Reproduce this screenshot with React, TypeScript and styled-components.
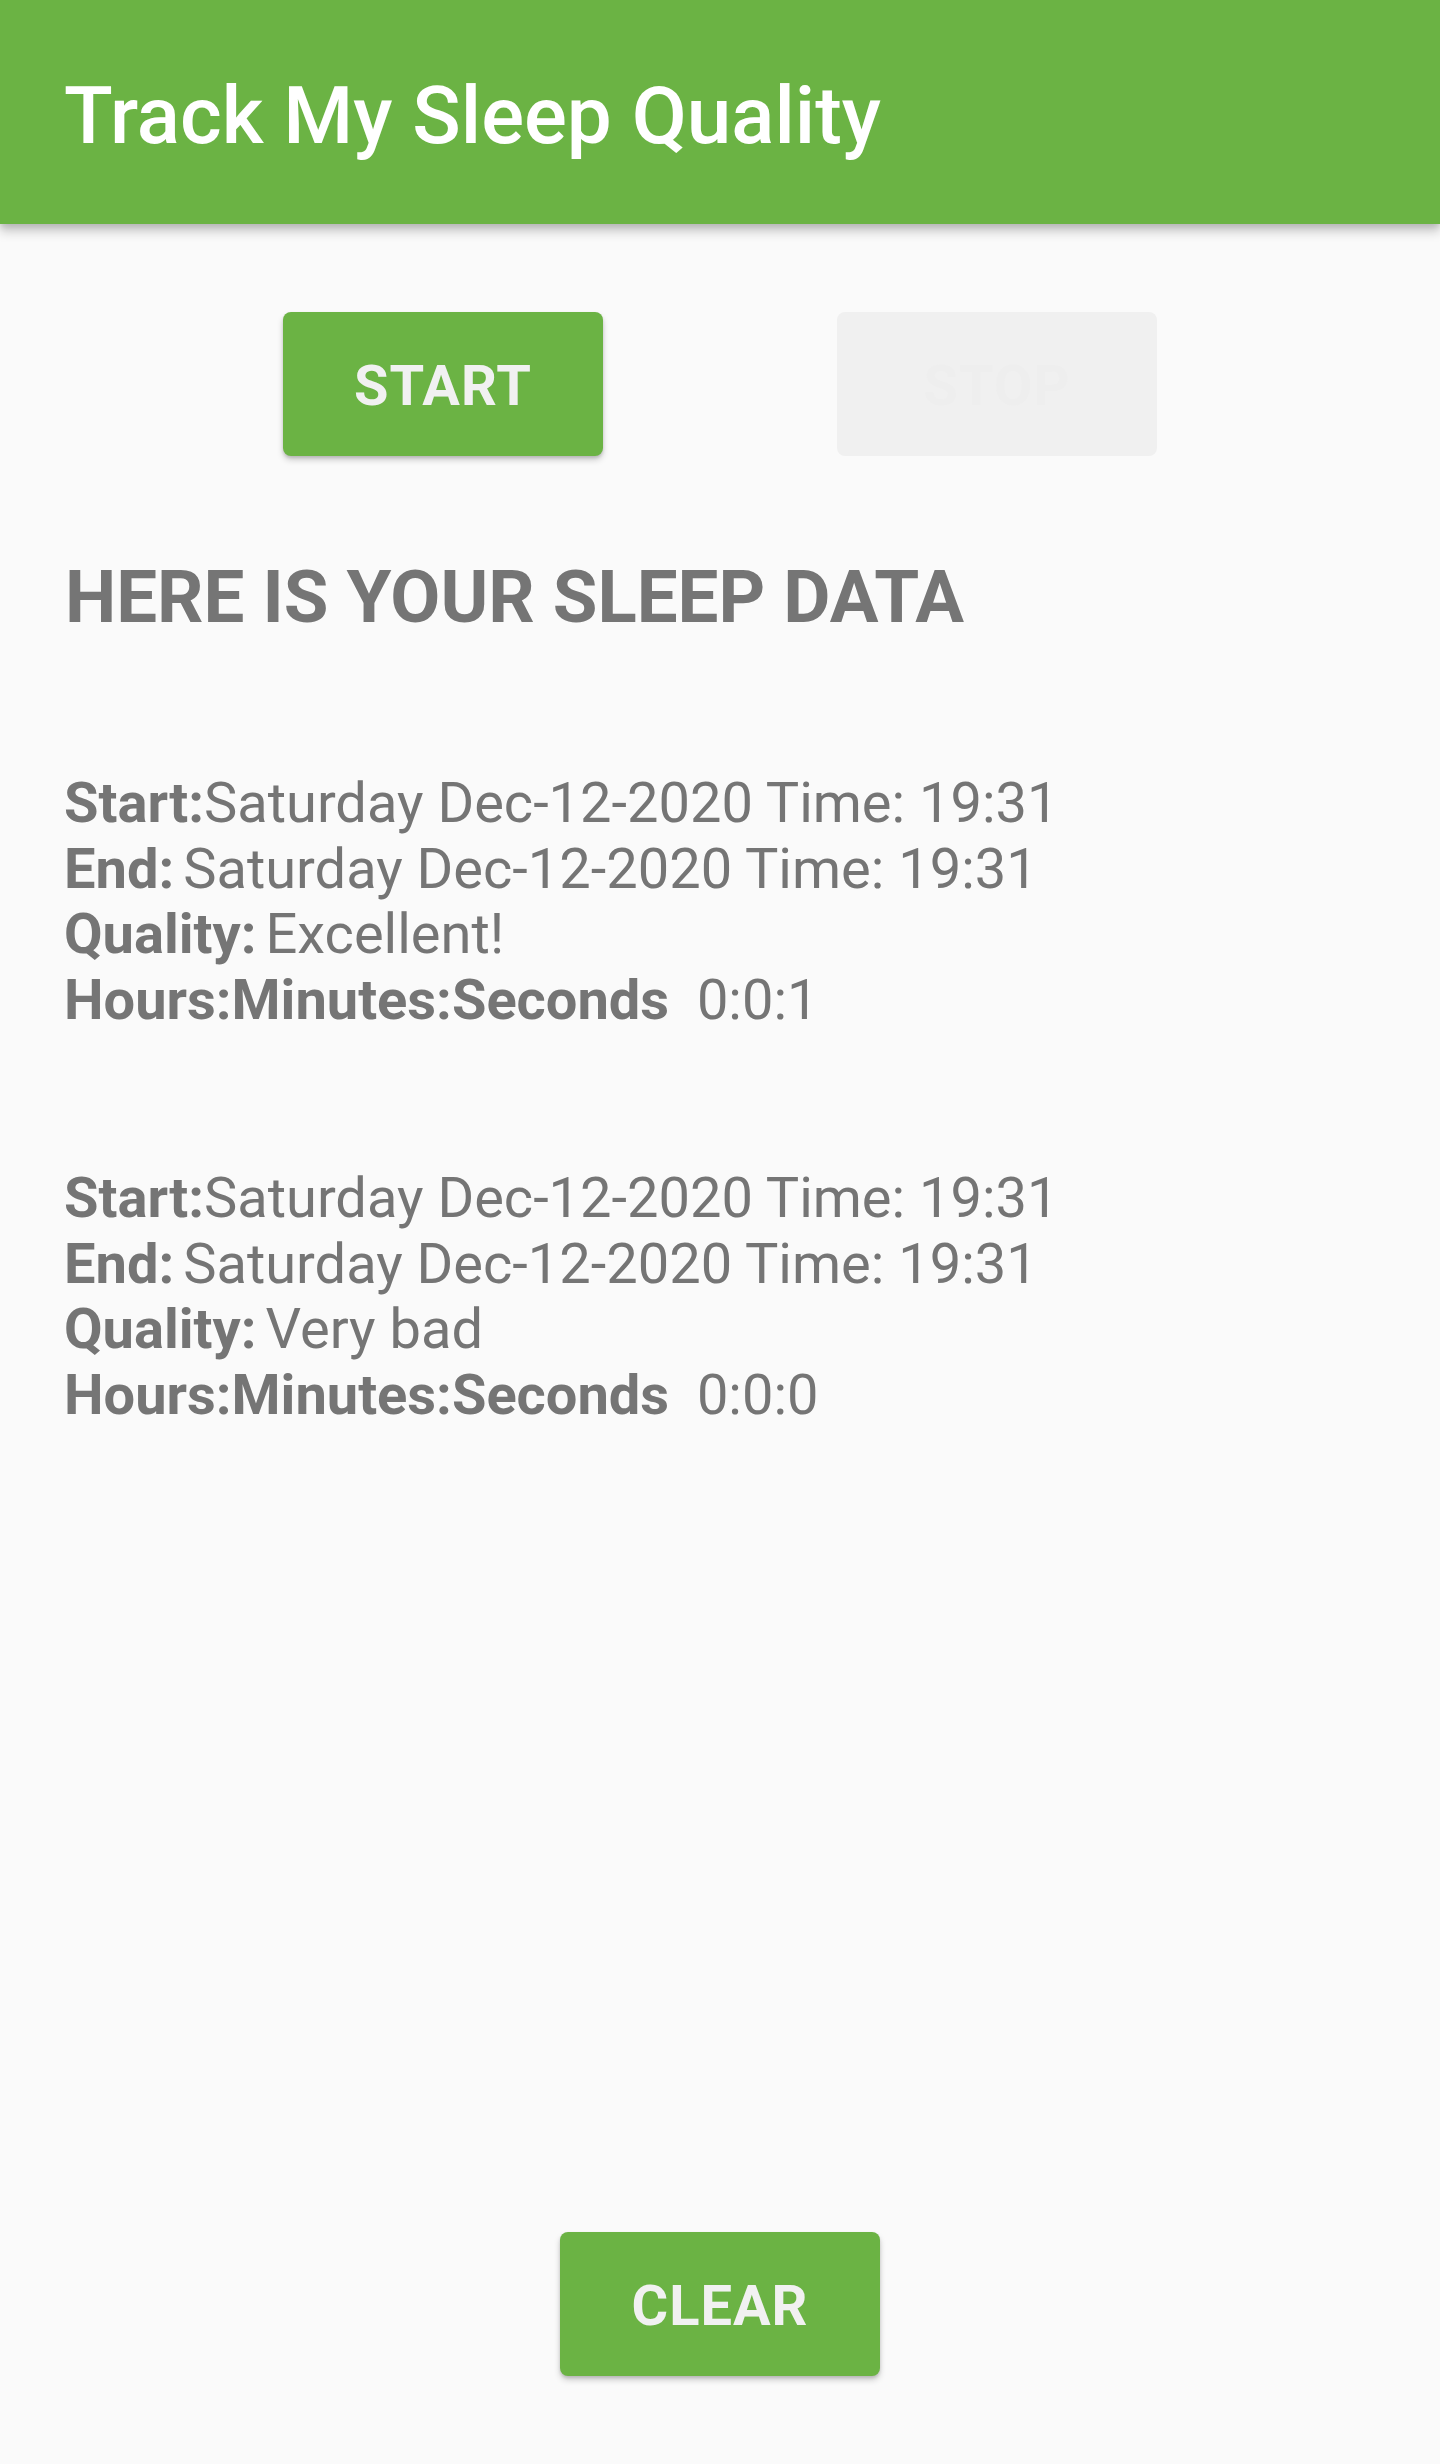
import React from "react";
import styled, { createGlobalStyle } from "styled-components";

const GlobalStyle = createGlobalStyle`
  html, body {
    margin: 0;
    padding: 0;
    background: #fafafa;
  }
  body {
    font-family: Roboto, "Noto Sans", "Liberation Sans", sans-serif;
  }
  * { box-sizing: border-box; }
`;

const GREEN = "#6bb344";
const TEXT = "#757575";

const Screen = styled.div`
  min-height: 100vh;
  display: flex;
  flex-direction: column;
  background: #fafafa;
`;

const AppBar = styled.header`
  height: 224px;
  background: ${GREEN};
  display: flex;
  align-items: center;
  padding: 8px 64px 0;
  box-shadow: 0 8px 10px rgba(0, 0, 0, 0.18), 0 3px 6px rgba(0, 0, 0, 0.12);
  position: relative;
  z-index: 1;
`;

const Title = styled.h1`
  margin: 0;
  font-size: 80px;
  line-height: 94px;
  font-weight: 500;
  color: #ffffff;
`;

const Controls = styled.div`
  display: flex;
  justify-content: space-between;
  padding: 0 283px;
  margin-top: 88px;
`;

const Button = styled.button<{ $disabled?: boolean }>`
  width: 320px;
  height: 144px;
  border: none;
  border-radius: 8px;
  background: ${(p) => (p.$disabled ? "#f0f0f0" : GREEN)};
  color: ${(p) => (p.$disabled ? "#eeeeee" : "#f1f1f1")};
  font-family: Roboto, "Noto Sans", sans-serif;
  font-weight: 700;
  font-size: 56px;
  letter-spacing: 1px;
  text-transform: uppercase;
  box-shadow: ${(p) =>
    p.$disabled
      ? "none"
      : "0 4px 6px rgba(0, 0, 0, 0.18), 0 2px 3px rgba(0, 0, 0, 0.12)"};
  display: flex;
  align-items: center;
  justify-content: center;
  padding: 4px 0 0;
`;

const Content = styled.main`
  padding: 0 64px;
  flex: 1;
`;

const Heading = styled.h2`
  margin: 100px 0 0 1px;
  font-size: 72.6px;
  line-height: 84px;
  font-weight: 700;
  color: ${TEXT};
`;

const Entry = styled.div`
  margin-top: 131px;
  & + & {
    margin-top: 132px;
  }
`;

const Line = styled.div`
  font-size: 56px;
  line-height: 65.7px;
  color: ${TEXT};
  white-space: pre;
`;

const Label = styled.span<{ $gap?: number }>`
  font-weight: 700;
  margin-right: ${(p) => p.$gap ?? 0}px;
`;

const Footer = styled.div`
  display: flex;
  justify-content: center;
  padding-bottom: 88px;
`;

type Night = {
  start: string;
  end: string;
  quality: string;
  duration: string;
};

const nights: Night[] = [
  {
    start: "Saturday Dec-12-2020 Time: 19:31",
    end: "Saturday Dec-12-2020 Time: 19:31",
    quality: "Excellent!",
    duration: "0:0:1",
  },
  {
    start: "Saturday Dec-12-2020 Time: 19:31",
    end: "Saturday Dec-12-2020 Time: 19:31",
    quality: "Very bad",
    duration: "0:0:0",
  },
];

export default function App() {
  return (
    <Screen>
      <GlobalStyle />
      <AppBar>
        <Title>Track My Sleep Quality</Title>
      </AppBar>
      <Controls>
        <Button>Start</Button>
        <Button $disabled>Stop</Button>
      </Controls>
      <Content>
        <Heading>HERE IS YOUR SLEEP DATA</Heading>
        {nights.map((n, i) => (
          <Entry key={i}>
            <Line>
              <Label>Start:</Label>
              {n.start}
            </Line>
            <Line>
              <Label $gap={9}>End:</Label>
              {n.end}
            </Line>
            <Line>
              <Label $gap={9}>Quality:</Label>
              {n.quality}
            </Line>
            <Line>
              <Label>Hours:Minutes:Seconds</Label>
              {"  " + n.duration}
            </Line>
          </Entry>
        ))}
      </Content>
      <Footer>
        <Button>Clear</Button>
      </Footer>
    </Screen>
  );
}
